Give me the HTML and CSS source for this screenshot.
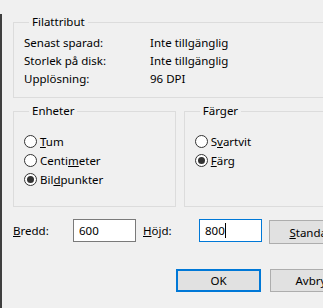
FILE: index.html
```html
<!DOCTYPE html>
<html lang="sv">
<head>
    <meta charset="UTF-8">
    <meta name="viewport" content="width=device-width, initial-scale=1.0">
    <title>Attribut</title>
    <link rel="stylesheet" href="styles.css">
</head>
<body>
    <div class="dialog">
        <fieldset class="group group-info">
            <legend>Filattribut</legend>
            <div class="info-row"><span class="info-label">Senast sparad:</span><span>Inte tillgänglig</span></div>
            <div class="info-row"><span class="info-label">Storlek på disk:</span><span>Inte tillgänglig</span></div>
            <div class="info-row"><span class="info-label">Upplösning:</span><span>96 DPI</span></div>
        </fieldset>

        <div class="groups">
            <fieldset class="group group-units">
                <legend>Enheter</legend>
                <div class="radio"><span class="dot"></span><span><u>T</u>um</span></div>
                <div class="radio"><span class="dot"></span><span>Centi<u>m</u>eter</span></div>
                <div class="radio"><span class="dot checked"></span><span>Bil<u>d</u>punkter</span></div>
            </fieldset>
            <fieldset class="group group-colors">
                <legend>Färger</legend>
                <div class="radio"><span class="dot"></span><span>S<u>v</u>artvit</span></div>
                <div class="radio"><span class="dot checked"></span><span><u>F</u>ärg</span></div>
            </fieldset>
        </div>

        <div class="size-row">
            <span class="size-label"><u>B</u>redd:</span>
            <div class="textbox">600</div>
            <span class="size-label height-label"><u>H</u>öjd:</span>
            <div class="textbox focused">800<span class="caret"></span></div>
            <button class="btn btn-default-size"><u>S</u>tandard</button>
        </div>

        <div class="actions">
            <button class="btn btn-ok">OK</button>
            <button class="btn">Avbryt</button>
        </div>
    </div>
</body>
</html>
```

FILE: styles.css
```css
html, body {
    margin: 0;
    padding: 0;
}
body {
    background-color: #f0f0f0;
    font-family: "Noto Sans", "DejaVu Sans", sans-serif;
    font-size: 11.5px;
    color: #000;
    overflow: hidden;
    height: 308px;
}
.dialog {
    border-left: 2px solid #3f3f3f;
    padding-left: 11px;
    width: 360px;
    height: 308px;
    box-sizing: border-box;
}
.group {
    margin: 0;
    padding: 0 10px;
    border: 1px solid #dcdcdc;
    min-width: 0;
}
.group legend {
    margin-left: 5px;
    padding: 0 3px;
    line-height: 16px;
}
.group-info {
    margin-top: 14px;
    width: 345px;
    padding-top: 4px;
    padding-bottom: 9px;
}
.info-row {
    display: flex;
    line-height: 18px;
}
.info-label {
    width: 126px;
}
.groups {
    display: flex;
    gap: 8px;
    margin-top: 5px;
}
.group-units {
    width: 168px;
    box-sizing: border-box;
    padding-top: 13px;
    padding-bottom: 17px;
}
.group-colors {
    width: 160px;
    padding-top: 13px;
}
.radio {
    display: flex;
    align-items: center;
    gap: 3px;
    line-height: 19px;
    height: 19px;
}
.dot {
    width: 13px;
    height: 13px;
    box-sizing: border-box;
    border: 1px solid #333;
    border-radius: 50%;
    background: #fff;
    display: flex;
    align-items: center;
    justify-content: center;
}
.dot.checked::after {
    content: "";
    width: 7px;
    height: 7px;
    border-radius: 50%;
    background: #333;
}
.size-row {
    display: flex;
    align-items: flex-start;
    margin-top: 12px;
}
.size-label {
    width: 60px;
    line-height: 23px;
}
.height-label {
    width: 56px;
    margin-left: 7px;
}
.textbox {
    width: 63px;
    height: 23px;
    box-sizing: border-box;
    border: 1px solid #7a7a7a;
    background: #fff;
    padding-left: 5px;
    line-height: 21px;
    display: flex;
    align-items: center;
}
.textbox.focused {
    border-color: #0078d7;
}
.caret {
    width: 1px;
    height: 15px;
    background: #000;
}
.btn {
    font-family: inherit;
    font-size: 11.5px;
    color: #000;
    background: #e1e1e1;
    border: 1px solid #adadad;
    width: 86px;
    height: 23px;
    padding: 0;
    margin: 0;
}
.btn-default-size {
    margin-left: 7px;
    margin-top: 1px;
    height: 24px;
    width: 90px;
}
.actions {
    display: flex;
    gap: 9px;
    margin-top: 25px;
    margin-left: 163px;
}
.btn-ok {
    border: 2px solid #0078d7;
    width: 85px;
}
```
